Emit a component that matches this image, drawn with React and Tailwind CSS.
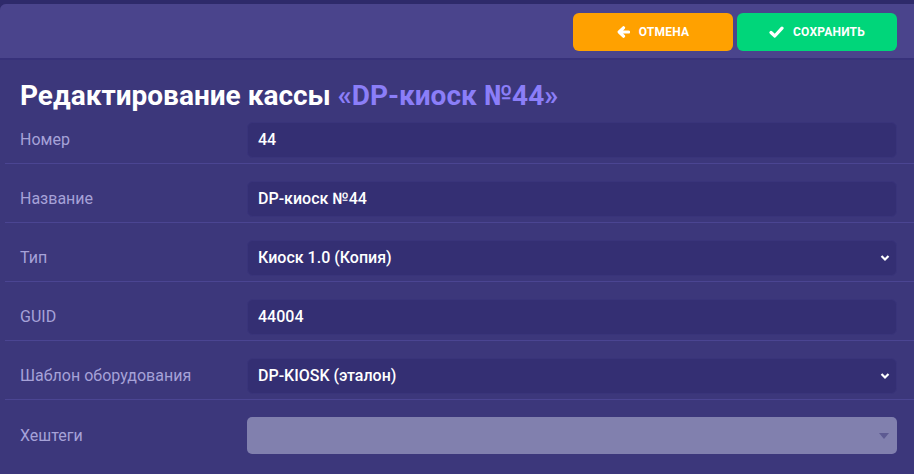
import React from 'react';

const rows = [
  { label: 'Номер', value: '44', kind: 'input' },
  { label: 'Название', value: 'DP-киоск №44', kind: 'input' },
  { label: 'Тип', value: 'Киоск 1.0 (Копия)', kind: 'select' },
  { label: 'GUID', value: '44004', kind: 'input' },
  { label: 'Шаблон оборудования', value: 'DP-KIOSK (эталон)', kind: 'select' },
  { label: 'Хештеги', value: '', kind: 'tags' },
];

function Chevron() {
  return (
    <svg width="10" height="8" viewBox="0 0 10 8" className="text-white">
      <path d="M1.5 2 L5 5.5 L8.5 2" stroke="currentColor" strokeWidth="2.2" fill="none" />
    </svg>
  );
}

function ArrowIcon() {
  return (
    <svg width="13" height="12" viewBox="0 0 13 12">
      <path d="M11.5 6 H3 M6.5 1.8 L2.2 6 L6.5 10.2" stroke="white" strokeWidth="3.2" strokeLinecap="round" strokeLinejoin="round" fill="none" />
    </svg>
  );
}

function CheckIcon() {
  return (
    <svg width="15" height="12" viewBox="0 0 15 12">
      <path d="M2 6.5 L5.8 10 L13 2.2" stroke="white" strokeWidth="3.2" strokeLinecap="round" strokeLinejoin="round" fill="none" />
    </svg>
  );
}

export default function App() {
  return (
    <div className="w-[914px] h-[474px] overflow-hidden bg-[#2e2a6a] pt-[4px] font-['Roboto',sans-serif]">
      <div className="h-full bg-[#3c377b] rounded-tl-[6px] overflow-hidden">
        {/* шапка с кнопками */}
        <header className="h-[56px] bg-[#4a448c] border-b-2 border-[#37317a] flex items-center justify-end gap-[4px] pr-[17px] pt-[2px]">
          <button className="w-[160px] h-[38px] rounded-[6px] bg-[#ffa100] text-white text-[12px] font-bold uppercase flex items-center justify-center gap-[9px] tracking-[0.2px]">
            <ArrowIcon />
            Отмена
          </button>
          <button className="w-[160px] h-[38px] rounded-[6px] bg-[#00d67a] text-white text-[12px] font-bold uppercase flex items-center justify-center gap-[9px] tracking-[0.2px]">
            <CheckIcon />
            Сохранить
          </button>
        </header>

        <h1 className="h-[45px] pt-[20px] pl-[20px] text-[28px] leading-[32px] font-bold text-white">
          Редактирование кассы <span className="text-[#8b7ef8]">«DP-киоск №44»</span>
        </h1>

        <div className="pl-[5px]">
          {rows.map((r, i) => (
            <div
              key={r.label}
              className={`flex items-center pt-[17px] pb-[5px] ${i < rows.length - 1 ? 'border-b border-[#4b4592]' : ''}`}
            >
              <div className="w-[242px] pl-[15px] text-[16px] text-[#a6a2d8]">{r.label}</div>
              {r.kind === 'tags' ? (
                <div className="w-[650px] h-[37px] rounded-[5px] bg-[#8180ae] flex items-center justify-end pr-[8px]">
                  <svg width="10" height="6" viewBox="0 0 10 6"><path d="M0 0 H10 L5 6 Z" fill="#5d5a92" /></svg>
                </div>
              ) : (
                <div className="w-[650px] h-[36px] rounded-[6px] bg-[#342f73] border border-[#39347a] flex items-center justify-between pl-[10px] pr-[6px] text-[16px] font-medium text-white">
                  <span>{r.value}</span>
                  {r.kind === 'select' && <Chevron />}
                </div>
              )}
            </div>
          ))}
        </div>
      </div>
    </div>
  );
}
